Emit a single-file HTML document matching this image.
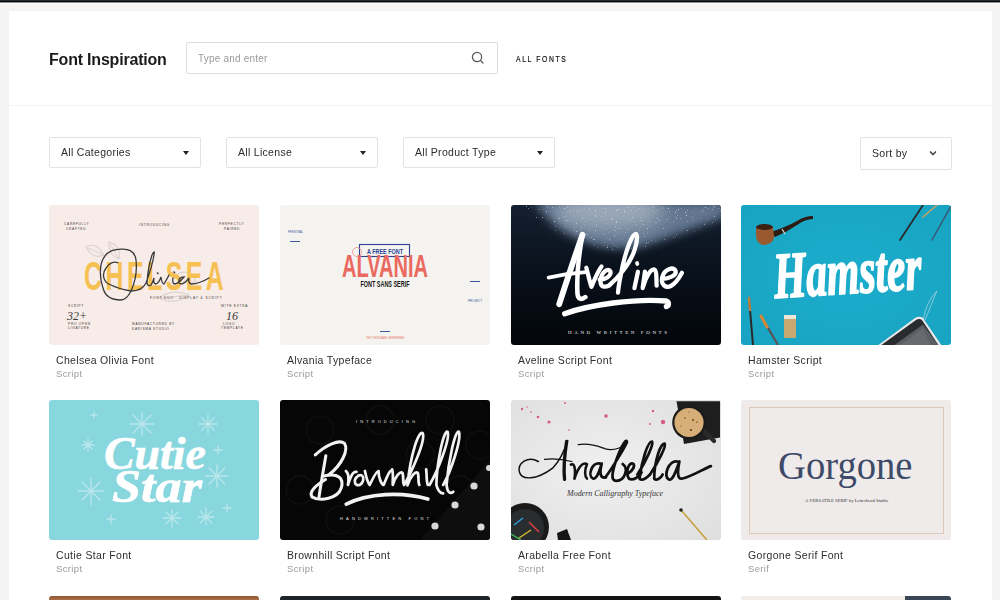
<!DOCTYPE html>
<html><head><meta charset="utf-8">
<style>
*{box-sizing:border-box;margin:0;padding:0}
html,body{width:1000px;height:600px;overflow:hidden;background:#f4f4f4;font-family:"Liberation Sans",sans-serif}
.abs{position:absolute}
#title,#search .ph,.dd span,.ct,.cs{will-change:transform}
#topbar{position:absolute;left:0;top:0;width:1000px;height:4px;background:linear-gradient(#23282e 0,#23282e 1px,#05080b 1px,#05080b 2px,#8a8a8a 2px,#8a8a8a 3px,#fff 3px,#fff 4px)}
#frame{position:absolute;left:9px;top:11px;width:983px;height:600px;background:#fff}
#sep{position:absolute;left:9px;top:105px;width:983px;height:1px;background:#f2f2f2}
#title{position:absolute;left:49px;top:51px;font-size:16px;letter-spacing:-0.2px;font-weight:bold;color:#1b1b1b;white-space:nowrap}
#search{position:absolute;left:186px;top:42px;width:312px;height:32px;border:1px solid #dedede;border-radius:2px;background:#fff}
#search .ph{position:absolute;left:11px;top:10px;font-size:10px;letter-spacing:0.2px;color:#9a9a9a;white-space:nowrap}
#allfonts{position:absolute;left:516px;top:54px;transform:scaleX(0.8);transform-origin:0 0;font-size:8.5px;letter-spacing:2.05px;color:#111;font-weight:normal;-webkit-text-stroke:0.2px #111;white-space:nowrap}
.dd{position:absolute;top:137px;height:31px;border:1px solid #e2e2e2;border-radius:2px;background:#fff}
.dd span{position:absolute;left:11px;top:8px;font-size:10.5px;letter-spacing:0.3px;color:#2a2a2a;white-space:nowrap}
.dd i{position:absolute;right:11px;top:13px;width:0;height:0;border-left:3.5px solid transparent;border-right:3.5px solid transparent;border-top:4px solid #222}
.card{position:absolute;width:210px;height:140px;border-radius:3px;overflow:hidden}
.card svg{display:block;width:210px;height:140px}
.ct{position:absolute;font-size:10.5px;letter-spacing:0.33px;color:#2e2e2e;white-space:nowrap;margin-top:1px}
.cs{position:absolute;font-size:9.5px;letter-spacing:0.35px;color:#9a9a9a;white-space:nowrap;margin-top:-0.5px}
</style></head><body>
<div id="topbar"></div>
<div id="frame"></div>
<div id="sep"></div>
<div id="title">Font Inspiration</div>
<div id="search"><span class="ph">Type and enter</span>
<svg class="abs" style="left:284px;top:8px" width="14" height="14" viewBox="0 0 14 14"><circle cx="6" cy="6" r="4.6" fill="none" stroke="#555" stroke-width="1.2"/><line x1="9.4" y1="9.4" x2="12" y2="12" stroke="#555" stroke-width="1.3" stroke-linecap="round"/></svg>
</div>
<div id="allfonts">ALL FONTS</div>
<div class="dd" style="left:49px;width:152px"><span>All Categories</span><i></i></div>
<div class="dd" style="left:226px;width:152px"><span>All License</span><i></i></div>
<div class="dd" style="left:403px;width:152px"><span>All Product Type</span><i></i></div>
<div class="dd" style="left:860px;width:92px;height:33px"><span style="top:9px">Sort by</span>
<svg class="abs" style="left:68px;top:12px" width="8" height="6" viewBox="0 0 8 6"><path d="M1 1.5 L4 4.5 L7 1.5" fill="none" stroke="#333" stroke-width="1.3"/></svg></div>

<!-- CARDS -->
<div class="card" style="left:49px;top:205px"><svg viewBox="0 0 210 140">
<rect width="210" height="140" fill="#f7ece8"/>
<g fill="none" stroke="#dcd3ce" stroke-width="1.1">
<path d="M37 42 Q47 36 55 50 Q44 55 37 42Z M39 43 L55 50"/>
<path d="M60 37 Q73 41 70 54 Q59 50 60 37Z M61 39 L70 54"/>
<path d="M110 93 Q124 83 140 90 Q126 101 110 93Z M112 93 L140 90"/>
<path d="M126 70 Q140 62 147 76 Q133 81 126 70Z"/>
</g>
<g transform="translate(35 84.7) scale(0.6 1)"><text x="0" y="0" font-family="Liberation Sans" font-weight="bold" font-size="41.5" fill="#f6c152" textLength="233" lengthAdjust="spacing">CHELSEA</text></g>
<g fill="none" stroke="#3a3a3a" stroke-width="1.3" stroke-linecap="round">
<path d="M73 44.2 C80 44 86 47 87 55 C88 64 87 75 82 86 C79 92 76 95 72 95 C63 95 56 91 54 83 C51 75 50 62 54 54 C57 48 64 44 73 44.2 Z"/>
<path d="M68.7 57.7 C65 56 60 58 57 63 C52 70 55 78 62 80 C68 83 76 85 82 86 C88 86 94 84 97 78 Q103 62 105 50 Q106 44 103 50 Q99 62 98 78 Q99 82 102 80 Q104 77 105 73 Q104 79 107 79 Q110 78 112 72 Q113 79 115 79 Q118 74 120 70 M124 73 Q123 79 126 79 Q130 78 135 72 Q129 72 130 78 Q134 81 140 73 Q139 78 142 79 Q150 79 160 73"/><path d="M108.5 68 L109 68.5 M125 67 L125.5 67.5" stroke-width="1.6"/>
</g>
<g fill="#3d3a38" font-family="Liberation Sans" font-size="3.2" letter-spacing="0.75">
<text x="15" y="20">CAREFULLY</text><text x="17" y="24.5">CRAFTED</text>
<text x="90" y="20.5">INTRODUCING</text>
<text x="170" y="20">PERFECTLY</text><text x="175" y="24.5">PAIRED</text>
<text x="101" y="94" letter-spacing="0.9">FONT DUO · DISPLAY &amp; SCRIPT</text>
<text x="83" y="120">MANUFACTURED BY</text><text x="83" y="124.5">KARISMA STUDIO</text>
<text x="19" y="102">SCRIPT</text><text x="19" y="120">PRO OPEN</text><text x="19" y="124">LIGATURE</text>
<text x="172" y="102">WITH EXTRA</text><text x="174" y="120">LOGO</text><text x="172" y="124">TEMPLATE</text>
</g>
<text x="18" y="115" font-family="Liberation Serif" font-style="italic" font-size="12" fill="#3a3a3a">32+</text>
<text x="177" y="115" font-family="Liberation Serif" font-style="italic" font-size="12" fill="#3a3a3a">16</text>
</svg></div>

<div class="card" style="left:280px;top:205px"><svg viewBox="0 0 210 140">
<rect width="210" height="140" fill="#f5f3ef"/>
<rect x="79.5" y="39.5" width="50" height="12" fill="none" stroke="#2c4393" stroke-width="1.1"/>
<circle cx="77" cy="47" r="4.5" fill="none" stroke="#ea8a80" stroke-width="0.7"/>
<text x="87" y="49" font-family="Liberation Sans" font-weight="bold" font-size="8" fill="#2c4393" textLength="36" lengthAdjust="spacingAndGlyphs">A FREE FONT</text>
<text x="62" y="71.5" font-family="Liberation Sans" font-weight="bold" font-size="32" fill="#ea6a5f" textLength="86" lengthAdjust="spacingAndGlyphs">ALVANIA</text>
<text x="80.5" y="82" font-family="Liberation Sans" font-weight="bold" font-size="9.8" fill="#151515" textLength="49" lengthAdjust="spacingAndGlyphs">FONT SANS SERIF</text>
<g fill="#3b55a0" font-family="Liberation Sans" font-size="3">
<text x="8" y="27.5" textLength="15" lengthAdjust="spacingAndGlyphs">PERSONAL</text>
<rect x="10" y="36" width="10" height="1"/>
<text x="188" y="96.5" textLength="14" lengthAdjust="spacingAndGlyphs">PROJECT</text>
<rect x="190" y="76" width="10" height="1"/>
<rect x="100" y="126" width="10" height="1"/>
</g>
<text x="86" y="134" font-family="Liberation Sans" font-size="3" fill="#e46a5f" textLength="38" lengthAdjust="spacingAndGlyphs">TWO THOUSAND SEVENTEEN</text>
</svg></div>

<div class="card" style="left:511px;top:205px"><svg viewBox="0 0 210 140">
<defs>
<linearGradient id="avbg" x1="0" y1="0" x2="0" y2="1"><stop offset="0" stop-color="#142030"/><stop offset="0.5" stop-color="#08101a"/><stop offset="1" stop-color="#03060a"/></linearGradient>
<filter id="blur5" x="-30%" y="-80%" width="160%" height="260%"><feGaussianBlur stdDeviation="5"/></filter>
<filter id="blur9" x="-50%" y="-100%" width="200%" height="300%"><feGaussianBlur stdDeviation="9"/></filter>
<filter id="spk" x="0" y="0" width="100%" height="100%"><feTurbulence type="fractalNoise" baseFrequency="0.9" numOctaves="2" seed="3"/><feColorMatrix type="matrix" values="0 0 0 0 1  0 0 0 0 1  0 0 0 0 1  0 0 0 9 -6.2"/></filter>
<clipPath id="avclip"><path d="M10 0 Q45 34 84 42 Q110 48 130 44 Q165 34 210 17 L210 0Z"/></clipPath>
</defs>
<rect width="210" height="140" fill="url(#avbg)"/>
<path d="M22 -4 Q50 30 84 40 Q110 46 130 42 Q160 32 214 12 L214 -4Z" fill="#627690" filter="url(#blur5)"/>
<ellipse cx="98" cy="6" rx="55" ry="19" fill="#9aa8b8" filter="url(#blur9)"/>
<rect width="210" height="140" filter="url(#spk)" clip-path="url(#avclip)" opacity="0.55"/>
<g fill="none" stroke="#fff" stroke-linecap="round" stroke-linejoin="round" transform="translate(30 20) scale(0.1584)">
<path d="M262 62 C220 180 160 360 115 500" stroke-width="37"/>
<path d="M262 62 C240 180 225 330 230 430 C232 470 255 475 280 455" stroke-width="29"/>
<path d="M48 332 C120 315 200 303 280 298" stroke-width="24"/>
<path d="M286 270 C300 320 310 370 318 390 C340 340 360 290 382 262" stroke-width="27"/>
<path d="M370 345 C410 345 445 320 438 292 C425 268 382 295 376 350 C372 395 405 395 430 382 C480 340 560 250 590 160 C610 100 612 55 595 57 C575 60 540 150 515 260 C500 330 488 400 486 427" stroke-width="27"/>
<path d="M612 295 C605 330 595 370 590 398" stroke-width="27"/>
<path d="M606 240 L608 246" stroke-width="24"/>
<path d="M656 295 C652 330 645 370 642 398 C660 330 690 280 713 280 C732 285 728 340 730 383" stroke-width="27"/>
<path d="M770 340 C800 340 858 320 850 290 C835 262 780 275 765 330 C755 380 790 400 820 385 C850 370 875 330 890 302" stroke-width="27"/>
<path d="M150 560 C300 505 600 462 790 480 C812 490 806 510 792 515" stroke-width="34"/>
</g>
<text x="57" y="129" font-family="Liberation Serif" font-size="5" fill="#f4f4f4" textLength="99" lengthAdjust="spacing">HAND WRITTEN FONTS</text>
</svg></div>

<div class="card" style="left:741px;top:205px"><svg viewBox="0 0 210 140">
<defs><radialGradient id="hmbg" cx="0.5" cy="0.5" r="0.7"><stop offset="0" stop-color="#1cadcc"/><stop offset="1" stop-color="#18a3c2"/></radialGradient></defs>
<rect width="210" height="140" fill="url(#hmbg)"/>
<path d="M30 27 Q45 22 56 16 Q64 11 72 11 L72 14 Q64 14 56 20 Q46 27 34 32Z" fill="#2e1c12"/>
<path d="M41 24 L44 29" stroke="#ddd" stroke-width="1.2"/>
<path d="M15 22 Q22 19 32 22 Q33 30 33 33 Q31 40 22 40 Q15 38 15 30Z" fill="#9a5a30"/>
<ellipse cx="23.5" cy="22" rx="8.5" ry="3" fill="#3a2214"/>
<g stroke-linecap="round">
<line x1="159" y1="35" x2="182" y2="0" stroke="#2a2a2a" stroke-width="1.8"/>
<line x1="182" y1="12" x2="196" y2="0" stroke="#d0a060" stroke-width="1.4"/>
<line x1="191" y1="35" x2="210" y2="1" stroke="#3a5570" stroke-width="1.5"/>
<line x1="8" y1="93" x2="12" y2="140" stroke="#2a2a2a" stroke-width="2"/>
<line x1="8" y1="93" x2="9" y2="105" stroke="#c08040" stroke-width="2.4"/>
<line x1="20" y1="111" x2="37" y2="140" stroke="#555" stroke-width="2.2"/>
<line x1="20" y1="111" x2="26" y2="122" stroke="#d08a3a" stroke-width="3"/>
</g>
<rect x="43" y="110" width="12" height="23" rx="1" fill="#c9a870"/>
<rect x="43" y="110" width="12" height="4" fill="#efe6d8"/>
<path d="M136 141 L174 113 Q178 110.5 182 113 L201 141Z" fill="#e6e8ea"/>
<path d="M139 141 L175 115 Q178 113 181 115 L198 141Z" fill="#2a2b2e"/>
<path d="M152 141 L182 119.5 L198 141Z" fill="#5b5e64"/>
<path d="M158 141 L182 123 L190 141Z" fill="#676a70"/>
<path d="M182 116 C184 104 188 94 196 86 M184 115 C189 104 192 94 196 86" fill="none" stroke="#dfe3e5" stroke-width="0.55"/>
<text transform="translate(34 93) rotate(-3.6) scale(1 1.3)" font-family="Liberation Serif" font-weight="bold" font-style="italic" font-size="50" fill="#fff" stroke="#fff" stroke-width="1.4" stroke-linejoin="round" textLength="148" lengthAdjust="spacingAndGlyphs">Hamster</text>
</svg></div>

<div class="card" style="left:49px;top:400px"><svg viewBox="0 0 210 140">
<rect width="210" height="140" fill="#89d7de"/>
<g stroke="#b8e6eb" stroke-width="1.3" stroke-linecap="round" fill="none">
<path d="M93 12 L93 36 M81 24 L105 24 M84 15 L102 33 M84 33 L102 15"/>
<path d="M159 15 L159 33 M150 24 L168 24 M153 18 L165 30 M153 30 L165 18"/>
<path d="M45 12 L45 18 M42 15 L48 15"/>
<path d="M39 39 L39 51 M33 45 L45 45 M35 41 L43 49 M35 49 L43 41"/>
<path d="M42 78 L42 105 M29 91 L55 91 M33 82 L51 100 M33 100 L51 82"/>
<path d="M168 65 L168 87 M157 76 L179 76 M160 68 L176 84 M160 84 L176 68"/>
<path d="M169 46 L169 54 M165 50 L173 50"/>
<path d="M178 104 L178 112 M174 108 L182 108"/>
<path d="M62 115 L62 124 M58 119 L66 119"/>
<path d="M123 110 L123 127 M114 118 L132 118 M117 112 L129 124 M117 124 L129 112"/>
<path d="M157 108 L157 125 M149 117 L165 117 M151 111 L163 123 M151 123 L163 111"/>
</g>
<text transform="translate(55 69) scale(1 1.2)" font-family="Liberation Serif" font-weight="bold" font-style="italic" font-size="38" fill="#fff" stroke="#fff" stroke-width="0.5" textLength="102" lengthAdjust="spacingAndGlyphs">Cutie</text>
<text transform="translate(63 102) scale(1 1.2)" font-family="Liberation Serif" font-weight="bold" font-style="italic" font-size="38" fill="#fff" stroke="#fff" stroke-width="0.5" textLength="90" lengthAdjust="spacingAndGlyphs">Star</text>
</svg></div>

<div class="card" style="left:280px;top:400px"><svg viewBox="0 0 210 140">
<rect width="210" height="140" fill="#060606"/>
<g fill="none" stroke="#0d0d0d" stroke-width="2">
<circle cx="40" cy="30" r="14"/><circle cx="100" cy="20" r="14"/><circle cx="160" cy="20" r="14"/><circle cx="200" cy="45" r="14"/>
<circle cx="20" cy="90" r="14"/><circle cx="60" cy="120" r="14"/><circle cx="140" cy="55" r="14"/><circle cx="180" cy="90" r="14"/>
</g>
<path d="M140 140 L210 60 L210 140Z" fill="#0e0e0e"/>
<g fill="#d8d8d8"><circle cx="194" cy="86" r="3.6"/><circle cx="175" cy="105" r="3.6"/><circle cx="155" cy="126" r="3.6"/><circle cx="201" cy="127" r="3.6"/><circle cx="209" cy="68" r="3"/></g>
<text x="76" y="23" font-family="Liberation Sans" font-size="4" fill="#e0e0e0" textLength="59" lengthAdjust="spacing">INTRODUCING</text>
<g fill="none" stroke="#f2f2f2" stroke-linecap="round" stroke-linejoin="round" transform="translate(20 20) scale(0.17)">
<path d="M90 205 C150 150 230 110 262 138 C285 175 250 260 170 322" stroke-width="18"/>
<path d="M152 210 C140 280 122 380 112 452" stroke-width="18"/>
<path d="M140 330 C222 310 262 340 242 402 C222 462 120 482 70 452 C50 420 100 380 150 350" stroke-width="18"/>
<path d="M270 300 C280 310 290 320 282 382 C300 330 310 300 332 305" stroke-width="16"/>
<path d="M342 328 C310 350 320 392 352 382 C382 362 378 310 342 328" stroke-width="16"/>
<path d="M382 300 C390 340 400 370 410 382 C430 340 450 300 462 300 C462 340 480 380 492 382 C510 340 520 310 532 300" stroke-width="16"/>
<path d="M542 290 C552 330 542 370 546 382 C560 330 590 300 602 310 C612 330 602 370 612 382 C660 300 740 120 722 78 C700 55 650 200 632 385 C650 330 680 300 692 310 C702 330 692 370 702 382" stroke-width="16"/>
<path d="M742 290 C747 320 742 360 752 382" stroke-width="16"/>
<path d="M762 382 C810 300 885 110 868 70 C845 55 805 250 802 382 C810 412 822 432 842 432" stroke-width="16"/>
<path d="M842 382 C890 300 950 110 935 70 C912 55 872 250 862 382 C866 420 880 440 902 422" stroke-width="16"/>
<path d="M272 495 C400 430 600 420 752 465" stroke-width="22"/>
</g>
<text x="60" y="120" font-family="Liberation Sans" font-size="4" fill="#e0e0e0" textLength="89" lengthAdjust="spacing">HANDWRITTEN FONT</text>
</svg></div>

<div class="card" style="left:511px;top:400px"><svg viewBox="0 0 210 140">
<defs><radialGradient id="arbg" cx="0.45" cy="0.5" r="0.75"><stop offset="0" stop-color="#f0f0f0"/><stop offset="1" stop-color="#dedede"/></radialGradient></defs>
<rect width="210" height="140" fill="url(#arbg)"/>
<g fill="#d0306a" opacity="0.75"><circle cx="11" cy="9" r="1.2"/><circle cx="16" cy="7" r="0.7"/><circle cx="27" cy="17" r="1.3"/><circle cx="38" cy="22" r="1.6"/><circle cx="54" cy="3" r="1"/><circle cx="95" cy="16" r="1.8"/><circle cx="142" cy="11" r="1.2"/><circle cx="152" cy="22" r="2.2"/><circle cx="139" cy="24" r="1"/><circle cx="58" cy="30" r="0.8"/><circle cx="20" cy="12" r="0.8"/></g>
<path d="M165.5 1.3 L209 1.3 L209 37.5 L173 44 Z" fill="#1e1e1e"/>
<path d="M193 31 L203 41" stroke="#2a2a2a" stroke-width="4.2" stroke-linecap="round"/>
<circle cx="178" cy="22.5" r="16.8" fill="#1b1b1b"/>
<circle cx="178" cy="22.5" r="14.6" fill="#d8ae78"/>
<g fill="#5a3a20"><circle cx="180" cy="30" r="1.1"/><circle cx="174" cy="18" r="0.7"/><circle cx="186" cy="22" r="0.7"/><circle cx="182" cy="20" r="0.9"/><circle cx="178" cy="12" r="0.6"/><circle cx="170" cy="26" r="0.6"/></g>
<circle cx="14" cy="127" r="24" fill="#1a1a1a"/>
<circle cx="14" cy="128" r="19" fill="#2a2d30"/>
<g stroke-width="1.4" fill="none"><path d="M3 125 L12 118" stroke="#2fa0e0"/><path d="M8 138 L20 130" stroke="#e0c030"/><path d="M18 122 L28 132" stroke="#e04040"/><path d="M0 134 L10 140" stroke="#40c060"/></g>
<path d="M46 133 L56 129 L60 140 L47 140Z" fill="#151515"/>
<path d="M170 110 L196 140" stroke="#c9a040" stroke-width="1.6"/>
<circle cx="170" cy="110" r="1.8" fill="#222"/>
<g fill="none" stroke="#111" stroke-linecap="round" stroke-linejoin="round" transform="translate(0 30) scale(0.21)">
<path d="M130 150 C80 120 30 160 40 200 C50 240 120 240 200 180 C240 140 260 80 270 50" stroke-width="7"/>
<path d="M265 55 C255 120 250 190 255 235" stroke-width="16"/>
<path d="M160 140 C200 135 250 140 290 150" stroke-width="6"/>
<path d="M285 165 C300 155 310 180 302 232 C320 180 340 150 362 162 C350 190 350 220 362 232" stroke-width="12"/>
<path d="M425 160 C385 150 362 220 392 232 C412 232 422 190 432 160 C422 200 422 232 452 226" stroke-width="13"/>
<path d="M320 70 C380 60 420 80 450 90 C490 100 550 80 550 55" stroke-width="6"/>
<path d="M452 222 C482 182 542 82 552 58 C552 40 532 60 502 140 C482 200 472 242 502 242 C542 242 562 182 532 162" stroke-width="13"/>
<path d="M560 205 C580 192 592 172 582 160 C562 150 542 200 562 232 C582 242 612 222 622 202" stroke-width="13"/>
<path d="M602 212 C642 152 682 62 672 55 C652 50 622 150 612 232 C622 242 642 232 662 212" stroke-width="13"/>
<path d="M662 212 C702 152 742 72 732 65 C712 60 682 150 682 232 C692 242 712 232 722 212" stroke-width="13"/>
<path d="M792 150 C752 140 722 222 752 236 C772 242 782 202 802 150 C792 200 792 232 812 232 C862 222 922 182 952 172" stroke-width="13"/>
</g>
<text x="56" y="96" font-family="Liberation Serif" font-style="italic" font-size="8" fill="#333" textLength="96" lengthAdjust="spacingAndGlyphs">Modern Calligraphy Typeface</text>
</svg></div>

<div class="card" style="left:741px;top:400px"><svg viewBox="0 0 210 140">
<rect width="210" height="140" fill="#efebea"/>
<rect x="8.5" y="7.5" width="194" height="126" fill="none" stroke="#dcbfa8" stroke-width="0.8"/>
<text x="37" y="78.5" font-family="Liberation Serif" font-size="39" fill="#3d4a68" textLength="134.5" lengthAdjust="spacingAndGlyphs">Gorgone</text>
<text x="64" y="101.5" font-family="Liberation Serif" font-size="3.4" fill="#333" textLength="83" lengthAdjust="spacingAndGlyphs">A VERSATILE SERIF by Letterhend Studio</text>
</svg></div>

<div class="card" style="left:49px;top:596px;background:linear-gradient(#8a5430,#b07048 4px)"></div>
<div class="card" style="left:280px;top:596px;background:#1f242a"></div>
<div class="card" style="left:511px;top:596px;background:#141414"></div>
<div class="card" style="left:741px;top:596px;background:linear-gradient(90deg,#f3ebe6 0,#f3ebe6 164px,#3a4556 164px)"></div>

<div class="ct" style="left:56px;top:353px">Chelsea Olivia Font</div><div class="cs" style="left:56px;top:368px">Script</div>
<div class="ct" style="left:287px;top:353px">Alvania Typeface</div><div class="cs" style="left:287px;top:368px">Script</div>
<div class="ct" style="left:518px;top:353px">Aveline Script Font</div><div class="cs" style="left:518px;top:368px">Script</div>
<div class="ct" style="left:748px;top:353px">Hamster Script</div><div class="cs" style="left:748px;top:368px">Script</div>
<div class="ct" style="left:56px;top:548px">Cutie Star Font</div><div class="cs" style="left:56px;top:563px">Script</div>
<div class="ct" style="left:287px;top:548px">Brownhill Script Font</div><div class="cs" style="left:287px;top:563px">Script</div>
<div class="ct" style="left:518px;top:548px">Arabella Free Font</div><div class="cs" style="left:518px;top:563px">Script</div>
<div class="ct" style="left:748px;top:548px">Gorgone Serif Font</div><div class="cs" style="left:748px;top:563px">Serif</div>
</body></html>
